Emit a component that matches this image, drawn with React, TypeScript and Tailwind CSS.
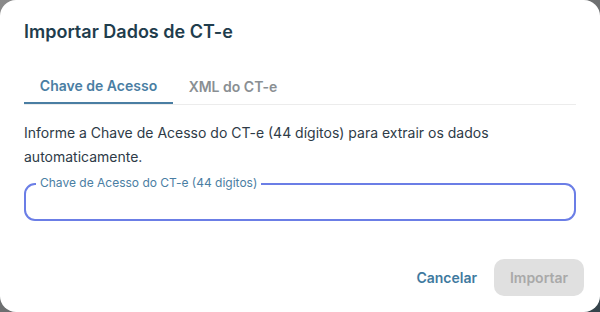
import React from "react";

export default function App() {
  return (
    <div className="w-[600px] h-[312px] bg-gradient-to-br from-[#8a8a8a] via-[#6d6f70] to-[#34434b]" style={{ fontFamily: "Inter, 'Noto Sans', sans-serif" }}>
      <div className="w-[600px] h-[312px] bg-white rounded-[16px] flex flex-col px-6">
        <h2 className="pt-[18px] text-[18px] leading-[28px] font-semibold text-[#1f3d4d]">Importar Dados de CT-e</h2>
        <div className="mt-[22px] flex border-b border-[#ececec]">
          <div className="w-[149px] h-[36px] flex items-center justify-center text-[14px] font-semibold text-[#4a7ea3] border-b-2 border-[#4a7ea3] -mb-px">Chave de Acesso</div>
          <div className="w-[120px] h-[36px] flex items-center justify-center text-[14px] font-semibold text-[#8a8f93]">XML do CT-e</div>
        </div>
        <p className="mt-[16px] text-[14px] leading-[24px] text-[#2e3b47]">Informe a Chave de Acesso do CT-e (44 dígitos) para extrair os dados automaticamente.</p>
        <div className="relative mt-[14px] h-[38px] rounded-[11px] border-2 border-[#6b7ee6]">
          <span className="absolute left-[10px] -top-[10px] px-[4px] bg-white text-[12px] leading-[16px] text-[#4a7ea3]">Chave de Acesso do CT-e (44 digitos)</span>
        </div>
        <div className="mt-auto mb-[16px] -mr-[8px] flex items-center justify-end gap-[17px]">
          <button className="text-[14px] font-semibold text-[#3f7aa0]">Cancelar</button>
          <button className="w-[90px] h-[37px] rounded-[10px] bg-[#e0e0e0] text-[14px] font-semibold text-[#a9a9a9]">Importar</button>
        </div>
      </div>
    </div>
  );
}
